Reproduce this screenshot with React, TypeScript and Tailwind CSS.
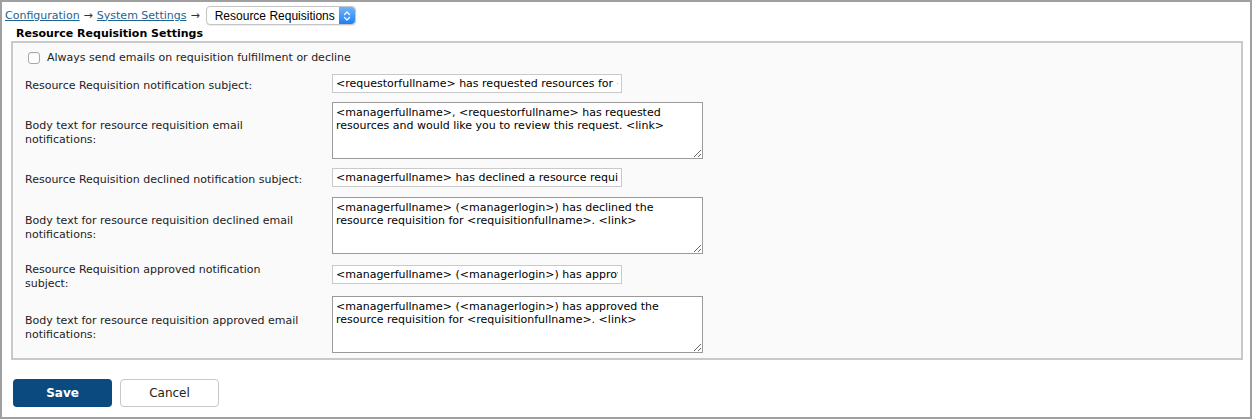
import React from "react";

const Stepper = () => (
  <div className="flex h-full w-[16px] items-center justify-center rounded-r-[4px] bg-gradient-to-b from-[#6db4fb] to-[#1b7ef6]">
    <svg width="8" height="12" viewBox="0 0 8 12" fill="none">
      <path d="M1.5 4.5 L4 2 L6.5 4.5" stroke="white" strokeWidth="1.3" strokeLinecap="round" strokeLinejoin="round" />
      <path d="M1.5 7.5 L4 10 L6.5 7.5" stroke="white" strokeWidth="1.3" strokeLinecap="round" strokeLinejoin="round" />
    </svg>
  </div>
);

const InputRow = ({ h, label, value }: { h: string; label: React.ReactNode; value: string }) => (
  <div className={`flex items-center ${h}`}>
    <div className="w-[307px] shrink-0 whitespace-nowrap pt-[5px] leading-[14px] text-[#222]">{label}</div>
    <input
      readOnly
      value={value}
      className="h-[19px] w-[290px] border border-[#c9c9c9] bg-white px-[3px] font-['DejaVu_Sans',sans-serif] text-[11px] text-black outline-none"
    />
  </div>
);

const AreaRow = ({ h, label, value }: { h: string; label: React.ReactNode; value: string }) => (
  <div className={`flex items-center ${h}`}>
    <div className="w-[307px] shrink-0 whitespace-nowrap pt-[6px] leading-[14px] text-[#222]">{label}</div>
    <textarea
      readOnly
      defaultValue={value}
      className="h-[57px] w-[371px] border border-[#9a9a9a] bg-white px-[3px] pt-[3px] pb-[2px] font-['DejaVu_Sans',sans-serif] text-[11px] leading-[13px] text-black outline-none"
    />
  </div>
);

export default function App() {
  return (
    <div className="flex h-[419px] w-[1252px] flex-col border-2 border-[#a0a0a0] bg-white font-['DejaVu_Sans',sans-serif] text-[11px] text-[#222]">
      <div className="flex items-center pl-[3px] pt-[4px]">
        <a href="#" className="pt-[1px] text-[#1d6394] underline">Configuration</a>
        <span className="mx-[4px] pt-[1px] text-[#333]">→</span>
        <a href="#" className="pt-[1px] text-[#1d6394] underline">System Settings</a>
        <span className="ml-[4px] mr-[6px] pt-[1px] text-[#333]">→</span>
        <div className="flex h-[19px] w-[150px] items-center justify-between rounded-[4px] border border-[#c4c4c4] bg-white shadow-[0_1px_1px_rgba(0,0,0,0.08)]">
          <span className="pl-[8px] font-['Liberation_Sans',sans-serif] text-[12px] text-black">Resource Requisitions</span>
          <Stepper />
        </div>
      </div>
      <div className="ml-[14px] mt-[2px] font-bold leading-[14px] text-black">Resource Requisition Settings</div>
      <div className="ml-[9px] mr-[7px] border-2 border-[#c9c9c9] bg-[#fafafa] pl-[12px]">
        <div className="flex h-[26px] items-center pt-[4px]">
          <input type="checkbox" className="ml-[3px] h-[12px] w-[12px] appearance-none rounded-[3px] border border-[#a8a8a8] bg-white shadow-[inset_0_1px_1px_rgba(0,0,0,0.06)]" />
          <span className="ml-[7px] pt-[1px] text-[#222]">Always send emails on requisition fulfillment or decline</span>
        </div>
        <InputRow h="h-[28px]" label="Resource Requisition notification subject:" value="<requestorfullname> has requested resources for <requisitionfullname>" />
        <AreaRow
          h="h-[66px]"
          label={<>Body text for resource requisition email<br />notifications:</>}
          value="<managerfullname>, <requestorfullname> has requested resources and would like you to review this request. <link>"
        />
        <InputRow h="h-[29px]" label="Resource Requisition declined notification subject:" value="<managerfullname> has declined a resource requisition" />
        <AreaRow
          h="h-[66px]"
          label={<>Body text for resource requisition declined email<br />notifications:</>}
          value="<managerfullname> (<managerlogin>) has declined the resource requisition for <requisitionfullname>. <link>"
        />
        <InputRow
          h="h-[33px]"
          label={<>Resource Requisition approved notification<br />subject:</>}
          value="<managerfullname> (<managerlogin>) has approved a resource requisition"
        />
        <AreaRow
          h="h-[67px]"
          label={<>Body text for resource requisition approved email<br />notifications:</>}
          value="<managerfullname> (<managerlogin>) has approved the resource requisition for <requisitionfullname>. <link>"
        />
      </div>
      <div className="ml-[11px] mt-[19px] flex gap-[8px]">
        <button className="h-[28px] w-[99px] rounded-[4px] bg-[#0b4a7f] text-[12px] font-bold text-white">Save</button>
        <button className="h-[28px] w-[99px] rounded-[4px] border border-[#c8c8c8] bg-white text-[12px] text-[#222]">Cancel</button>
      </div>
    </div>
  );
}
